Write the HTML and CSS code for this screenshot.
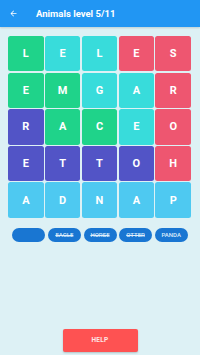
FILE: index.html
```html
<!DOCTYPE html>
<html>
<head>
<meta charset="utf-8">
<link rel="stylesheet" href="styles.css">
</head>
<body>
<div class="app">
  <header class="bar">
    <svg class="back" width="9" height="9" viewBox="0 0 24 24"><path d="M20 11H7.83l5.59-5.59L12 4l-8 8 8 8 1.41-1.41L7.83 13H20v-2z" fill="#fff"/></svg>
    <span class="title">Animals level 5/11</span>
  </header>
  <div class="grid">
    <div class="tile g">L</div><div class="tile c">E</div><div class="tile c">L</div><div class="tile r">E</div><div class="tile r">S</div>
    <div class="tile g">E</div><div class="tile g">M</div><div class="tile c">G</div><div class="tile c">A</div><div class="tile r">R</div>
    <div class="tile i">R</div><div class="tile g">A</div><div class="tile g">C</div><div class="tile c">E</div><div class="tile r">O</div>
    <div class="tile i">E</div><div class="tile i">T</div><div class="tile i">T</div><div class="tile i">O</div><div class="tile r">H</div>
    <div class="tile b">A</div><div class="tile b">D</div><div class="tile b">N</div><div class="tile b">A</div><div class="tile b">P</div>
  </div>
  <div class="chips">
    <span class="chip"></span>
    <span class="chip done">EAGLE</span>
    <span class="chip done">HORSE</span>
    <span class="chip done">OTTER</span>
    <span class="chip">PANDA</span>
  </div>
  <button class="help">HELP</button>
</div>
</body>
</html>
```
FILE: styles.css
```css
* { box-sizing: border-box; }
html, body { margin: 0; padding: 0; }
body {
  background: #ddf1f5;
  font-family: Roboto, "Liberation Sans", sans-serif;
}
.app {
  display: flex;
  flex-direction: column;
  height: 355px;
}
.bar {
  height: 27px;
  background: #2196f3;
  display: flex;
  align-items: center;
  padding-left: 9px;
  box-shadow: 0 1px 2px rgba(0,0,0,0.15);
}
.back { margin-right: 18px; }
.title {
  color: #fff;
  font-size: 9.5px;
  font-weight: 700;
}
.grid {
  margin: 9px 9px 0 8px;
  display: grid;
  grid-template-columns: repeat(5, 1fr);
  grid-auto-rows: 35.4px;
  gap: 1.2px;
}
.tile {
  border-radius: 2.5px;
  display: flex;
  align-items: center;
  justify-content: center;
  color: #fff;
  font-weight: 700;
  font-size: 11px;
}
.g { background: #1fd38a; }
.c { background: #38dcdb; }
.r { background: #ee5670; }
.i { background: #5254c6; }
.b { background: #4ec9f1; }
.chips {
  margin-top: 10px;
  display: flex;
  justify-content: center;
  gap: 2.6px;
}
.chip {
  width: 33px;
  height: 14.5px;
  border-radius: 7.5px;
  background: #1976d2;
  color: #dfeefc;
  font-size: 6px;
  font-weight: 500;
  display: flex;
  align-items: center;
  justify-content: center;
}
.done { text-decoration: line-through; }
.help {
  margin: auto auto 3px;
  width: 75px;
  height: 23.5px;
  border: none;
  border-radius: 2px;
  background: #fe5252;
  color: #fde5e5;
  font-family: Roboto, "Liberation Sans", sans-serif;
  font-size: 6.5px;
  font-weight: 700;
  letter-spacing: 0.3px;
  box-shadow: 0 1px 2px rgba(0,0,0,0.2);
  padding: 0;
}
```
